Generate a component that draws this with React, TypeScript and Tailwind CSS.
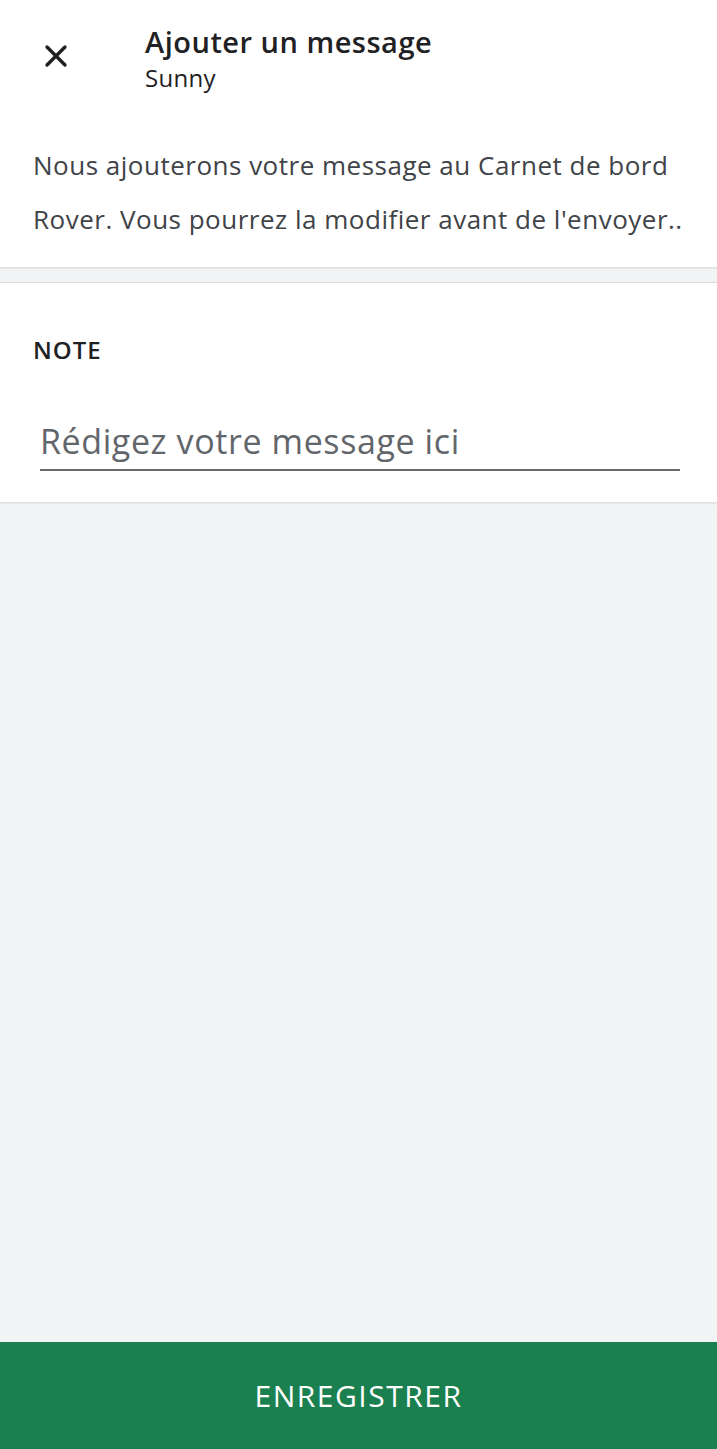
import { X } from "lucide-react";

const App = () => {
  return (
    <div className="min-h-[1449px] flex flex-col bg-[#f2f3f5] font-['Open_Sans','Noto_Sans',sans-serif]">
      {/* header + intro */}
      <div className="bg-white shadow-[0_1px_2px_rgba(0,0,0,0.12)]">
        <div className="flex items-start pt-[24px]">
          <button className="ml-[38px] mt-[14px] text-[#1f1f1f]">
            <X className="w-[36px] h-[36px]" strokeWidth={2.2} />
          </button>
          <div className="ml-[71px] flex flex-col">
            <h1 className="text-[29px] leading-[36px] font-semibold tracking-[0.5px] text-[#1f2124]">Ajouter un message</h1>
            <span className="text-[24px] leading-[30px] tracking-[0.3px] text-[#1f2124] mt-[3px]">Sunny</span>
          </div>
        </div>
        <p className="px-[33px] pt-[45px] pb-[21px] text-[26px] leading-[54px] tracking-[0.5px] text-[#404347]">
          Nous ajouterons votre message au Carnet de bord Rover. Vous pourrez la modifier avant de l'envoyer..
        </p>
      </div>

      <div className="h-[15px]" />

      {/* note */}
      <div className="bg-white border-t border-[#dcdde0] shadow-[0_1px_2px_rgba(0,0,0,0.12)] px-[33px] pt-[52px] pb-[31px]">
        <div className="text-[24px] leading-[30px] font-semibold text-[#1f2124] tracking-[1px]">NOTE</div>
        <div className="mt-[54px] ml-[7px] mr-[4px] border-b-2 border-[#666a6e] pb-[6px]">
          <input
            className="w-full outline-none bg-transparent text-[34px] leading-[44px] tracking-[0.6px] text-[#1f2124] placeholder:text-[#62666b]"
            placeholder="Rédigez votre message ici"
          />
        </div>
      </div>

      <div className="flex-1" />

      <button className="h-[107px] bg-[#1b8050] text-white text-[30px] tracking-[1.5px] flex items-center justify-center">
        ENREGISTRER
      </button>
    </div>
  );
};

export default App;
